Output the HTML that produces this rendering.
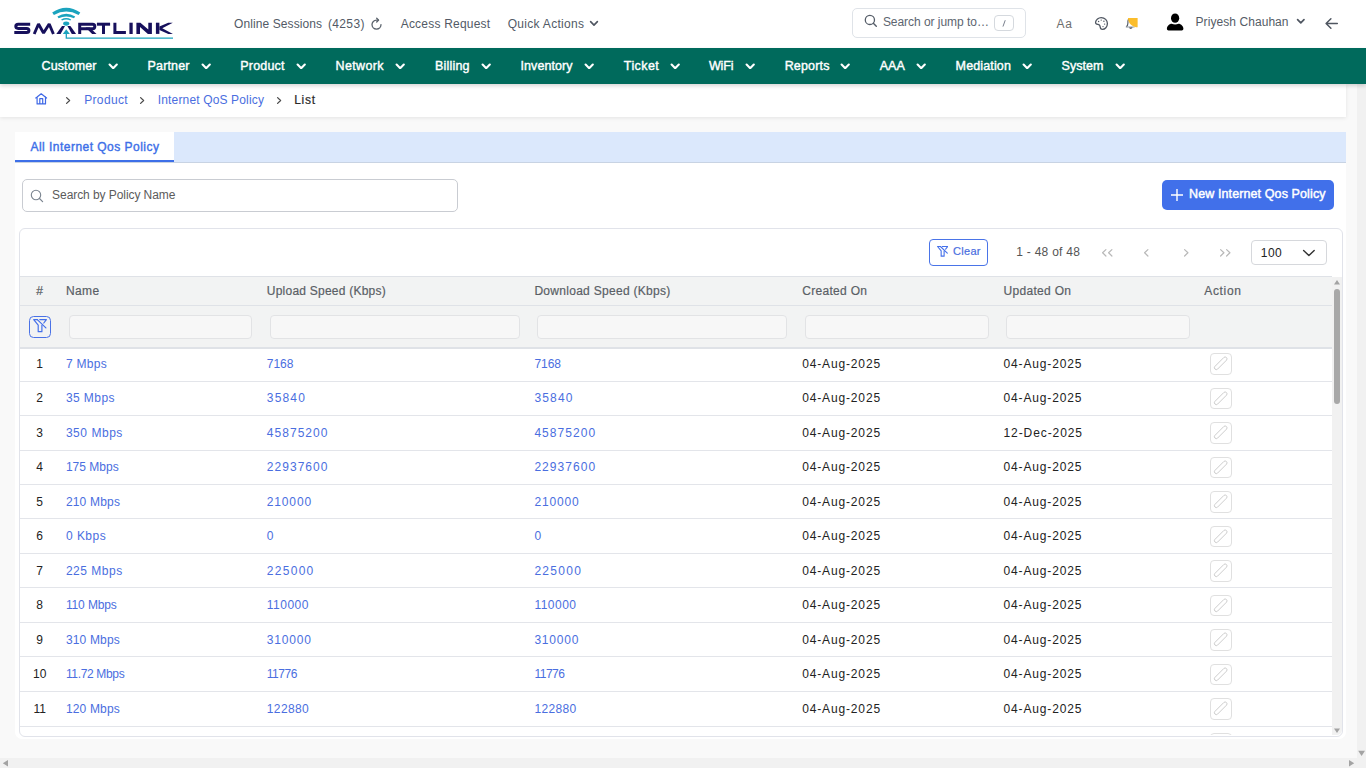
<!DOCTYPE html>
<html><head><meta charset="utf-8">
<style>
*{box-sizing:border-box;margin:0;padding:0}
html,body{width:1366px;height:768px;overflow:hidden;background:#f9f9f9;font-family:"Liberation Sans",sans-serif;position:relative}
.a{position:absolute;white-space:nowrap}
</style></head>
<body>
<div class="a" style="left:0;top:84px;width:1357px;height:674px;background:#f9f9f9"></div>
<div class="a" style="left:1357px;top:84px;width:9px;height:674px;background:#f1f1f1"></div>
<svg class="a" style="left:1357px;top:749.5px" width="9" height="7" viewBox="0 0 9 7"><path d="M1.2,0.8 L4.6,6 L8,0.8 Z" fill="#a3a3a3"/></svg>
<div class="a" style="left:0;top:758px;width:1366px;height:10px;background:#f1f1f1"></div>
<svg class="a" style="left:1px;top:759px" width="8" height="8" viewBox="0 0 8 8"><path d="M7,1 L1.8,4.2 L7,7.4 Z" fill="#a3a3a3"/></svg>
<svg class="a" style="left:1348px;top:759px" width="8" height="8" viewBox="0 0 8 8"><path d="M1,1 L6.2,4.2 L1,7.4 Z" fill="#a3a3a3"/></svg>
<div class="a" style="left:0;top:84px;width:1346px;height:32.5px;background:#fff;box-shadow:0 1px 4px rgba(0,0,0,.09)"></div>
<div class="a" style="left:15px;top:132px;width:1331px;height:606.5px;background:#fff;border-radius:0 0 7px 7px"></div>
<div class="a" style="left:15px;top:132px;width:1331px;height:31px;background:#dbe8fc;border-bottom:1px solid #c8d3e3"></div>
<div class="a" style="left:15px;top:132px;width:159px;height:30px;background:#fff;border-bottom:2px solid #3d6fe8"></div>
<div class="a" style="left:22px;top:178.5px;width:435.5px;height:33px;border:1px solid #c9ccd2;border-radius:5px;background:#fff"></div>
<svg class="a" style="left:29.5px;top:188.5px" width="14" height="14" viewBox="0 0 14 14"><circle cx="6" cy="6" r="4.7" fill="none" stroke="#7b8590" stroke-width="1.1"/><path d="M9.5,9.5 L12.6,12.6" stroke="#7b8590" stroke-width="1.2" stroke-linecap="round"/></svg>
<div class="a" style="left:1162px;top:180px;width:172px;height:30px;background:#4170ea;border-radius:5px"></div>
<svg class="a" style="left:1170.0px;top:187.6px" width="14" height="14" viewBox="0 0 14 14"><path d="M7,1 V13 M1,7 H13" stroke="#fff" stroke-width="1.4"/></svg>
<div class="a" style="left:19px;top:228px;width:1324px;height:508.5px;border:1px solid #e1e3ea;border-radius:6px;background:#fff"></div>
<div class="a" style="left:929px;top:239px;width:59px;height:27px;border:1px solid #4a74e8;border-radius:4px;background:#fff"></div><svg class="a" style="left:936.5px;top:245.7px" width="11.2" height="11.2" viewBox="0 0 14 14"><g fill="none" stroke="#4470ea" stroke-width="1.38" stroke-linejoin="round" stroke-linecap="round"><path d="M4.3,0.6 H0.7 L5.2,6.1 V12.7 H8.9 V6.3"/><path d="M6.8,0.6 H13.4 L10.8,4.0"/><path d="M4.3,0.6 L12.9,8.9"/></g></svg><svg class="a" style="left:1101px;top:247.5px" width="6.5" height="9.6" viewBox="-1 -1 6.5 9.6"><path d="M3.9,0.6 L0.6,3.8 L3.9,7.0" fill="none" stroke="#b8b8b8" stroke-width="1.2" stroke-linecap="round" stroke-linejoin="round"/></svg><svg class="a" style="left:1106.8px;top:247.5px" width="6.5" height="9.6" viewBox="-1 -1 6.5 9.6"><path d="M3.9,0.6 L0.6,3.8 L3.9,7.0" fill="none" stroke="#b8b8b8" stroke-width="1.2" stroke-linecap="round" stroke-linejoin="round"/></svg><svg class="a" style="left:1143px;top:247.5px" width="6.5" height="9.6" viewBox="-1 -1 6.5 9.6"><path d="M3.9,0.6 L0.6,3.8 L3.9,7.0" fill="none" stroke="#b8b8b8" stroke-width="1.2" stroke-linecap="round" stroke-linejoin="round"/></svg><svg class="a" style="left:1183px;top:247.5px" width="6.5" height="9.6" viewBox="-1 -1 6.5 9.6"><path d="M0.6,0.6 L3.9,3.8 L0.6,7.0" fill="none" stroke="#b8b8b8" stroke-width="1.2" stroke-linecap="round" stroke-linejoin="round"/></svg><svg class="a" style="left:1219px;top:247.5px" width="6.5" height="9.6" viewBox="-1 -1 6.5 9.6"><path d="M0.6,0.6 L3.9,3.8 L0.6,7.0" fill="none" stroke="#b8b8b8" stroke-width="1.2" stroke-linecap="round" stroke-linejoin="round"/></svg><svg class="a" style="left:1225px;top:247.5px" width="6.5" height="9.6" viewBox="-1 -1 6.5 9.6"><path d="M0.6,0.6 L3.9,3.8 L0.6,7.0" fill="none" stroke="#b8b8b8" stroke-width="1.2" stroke-linecap="round" stroke-linejoin="round"/></svg><div class="a" style="left:1250.8px;top:240.3px;width:76px;height:24.5px;border:1px solid #d6d8dc;border-radius:4px;background:#fff"></div><svg class="a" style="left:1302.4px;top:248.6px" width="13.8" height="8.2" viewBox="-1 -1 13.8 8.2"><path d="M0.6,0.6 L5.9,5.6000000000000005 L11.200000000000001,0.6" fill="none" stroke="#333" stroke-width="1.4" stroke-linecap="round" stroke-linejoin="round"/></svg>
<div class="a" style="left:0;top:0;width:1366px;height:768px;clip-path:inset(276px 24px 33px 20px round 0 0 5px 5px)"><div class="a" style="left:20px;top:276px;width:1312px;height:72px;background:#f2f3f3;border-top:1px solid #dfe2e7"></div><div class="a" style="left:20px;top:305px;width:1312px;height:1px;background:#dfe2e7"></div><div class="a" style="left:20px;top:347px;width:1312px;height:1.5px;background:#dfe2e7"></div><div class="a" style="left:20px;top:381px;width:1312px;height:1px;background:#e3e5ea"></div><div class="a" style="left:20px;top:415px;width:1312px;height:1px;background:#e3e5ea"></div><div class="a" style="left:20px;top:450px;width:1312px;height:1px;background:#e3e5ea"></div><div class="a" style="left:20px;top:484px;width:1312px;height:1px;background:#e3e5ea"></div><div class="a" style="left:20px;top:518px;width:1312px;height:1px;background:#e3e5ea"></div><div class="a" style="left:20px;top:553px;width:1312px;height:1px;background:#e3e5ea"></div><div class="a" style="left:20px;top:587px;width:1312px;height:1px;background:#e3e5ea"></div><div class="a" style="left:20px;top:622px;width:1312px;height:1px;background:#e3e5ea"></div><div class="a" style="left:20px;top:656px;width:1312px;height:1px;background:#e3e5ea"></div><div class="a" style="left:20px;top:691px;width:1312px;height:1px;background:#e3e5ea"></div><div class="a" style="left:20px;top:726px;width:1312px;height:1px;background:#e3e5ea"></div><div class="a" style="left:68.9px;top:314.8px;width:183.4px;height:24px;border:1px solid #e2e3e5;border-radius:4px;background:#f7f7f7"></div><div class="a" style="left:269.9px;top:314.8px;width:250.0px;height:24px;border:1px solid #e2e3e5;border-radius:4px;background:#f7f7f7"></div><div class="a" style="left:536.6px;top:314.8px;width:250.8px;height:24px;border:1px solid #e2e3e5;border-radius:4px;background:#f7f7f7"></div><div class="a" style="left:804.5px;top:314.8px;width:184.2px;height:24px;border:1px solid #e2e3e5;border-radius:4px;background:#f7f7f7"></div><div class="a" style="left:1005.5px;top:314.8px;width:184.2px;height:24px;border:1px solid #e2e3e5;border-radius:4px;background:#f7f7f7"></div><div class="a" style="left:29px;top:315.8px;width:22px;height:22px;border:1.3px solid #4a72e6;border-radius:4.5px"></div><svg class="a" style="left:32.6px;top:318.6px" width="14.0" height="14.0" viewBox="0 0 14 14"><g fill="none" stroke="#4470ea" stroke-width="1.20" stroke-linejoin="round" stroke-linecap="round"><path d="M4.3,0.6 H0.7 L5.2,6.1 V12.7 H8.9 V6.3"/><path d="M6.8,0.6 H13.4 L10.8,4.0"/><path d="M4.3,0.6 L12.9,8.9"/></g></svg><div class="a" style="left:1210px;top:353.20px;width:21.5px;height:21.5px;border:1px solid #e0e0e0;border-radius:4px;background:#fff"></div><svg class="a" style="left:1206px;top:350.20px" width="30" height="28" viewBox="0 0 30 28"><path d="M11.54,19.14 L20.54,10.14 A1.9,1.9 0 0 0 17.86,7.46 L8.86,16.46 A1.9,1.9 0 0 0 11.54,19.14 Z" fill="none" stroke="#cdcdcd" stroke-width="1.0"/></svg><div class="a" style="left:1210px;top:387.70px;width:21.5px;height:21.5px;border:1px solid #e0e0e0;border-radius:4px;background:#fff"></div><svg class="a" style="left:1206px;top:384.70px" width="30" height="28" viewBox="0 0 30 28"><path d="M11.54,19.14 L20.54,10.14 A1.9,1.9 0 0 0 17.86,7.46 L8.86,16.46 A1.9,1.9 0 0 0 11.54,19.14 Z" fill="none" stroke="#cdcdcd" stroke-width="1.0"/></svg><div class="a" style="left:1210px;top:422.20px;width:21.5px;height:21.5px;border:1px solid #e0e0e0;border-radius:4px;background:#fff"></div><svg class="a" style="left:1206px;top:419.20px" width="30" height="28" viewBox="0 0 30 28"><path d="M11.54,19.14 L20.54,10.14 A1.9,1.9 0 0 0 17.86,7.46 L8.86,16.46 A1.9,1.9 0 0 0 11.54,19.14 Z" fill="none" stroke="#cdcdcd" stroke-width="1.0"/></svg><div class="a" style="left:1210px;top:456.70px;width:21.5px;height:21.5px;border:1px solid #e0e0e0;border-radius:4px;background:#fff"></div><svg class="a" style="left:1206px;top:453.70px" width="30" height="28" viewBox="0 0 30 28"><path d="M11.54,19.14 L20.54,10.14 A1.9,1.9 0 0 0 17.86,7.46 L8.86,16.46 A1.9,1.9 0 0 0 11.54,19.14 Z" fill="none" stroke="#cdcdcd" stroke-width="1.0"/></svg><div class="a" style="left:1210px;top:491.20px;width:21.5px;height:21.5px;border:1px solid #e0e0e0;border-radius:4px;background:#fff"></div><svg class="a" style="left:1206px;top:488.20px" width="30" height="28" viewBox="0 0 30 28"><path d="M11.54,19.14 L20.54,10.14 A1.9,1.9 0 0 0 17.86,7.46 L8.86,16.46 A1.9,1.9 0 0 0 11.54,19.14 Z" fill="none" stroke="#cdcdcd" stroke-width="1.0"/></svg><div class="a" style="left:1210px;top:525.70px;width:21.5px;height:21.5px;border:1px solid #e0e0e0;border-radius:4px;background:#fff"></div><svg class="a" style="left:1206px;top:522.70px" width="30" height="28" viewBox="0 0 30 28"><path d="M11.54,19.14 L20.54,10.14 A1.9,1.9 0 0 0 17.86,7.46 L8.86,16.46 A1.9,1.9 0 0 0 11.54,19.14 Z" fill="none" stroke="#cdcdcd" stroke-width="1.0"/></svg><div class="a" style="left:1210px;top:560.20px;width:21.5px;height:21.5px;border:1px solid #e0e0e0;border-radius:4px;background:#fff"></div><svg class="a" style="left:1206px;top:557.20px" width="30" height="28" viewBox="0 0 30 28"><path d="M11.54,19.14 L20.54,10.14 A1.9,1.9 0 0 0 17.86,7.46 L8.86,16.46 A1.9,1.9 0 0 0 11.54,19.14 Z" fill="none" stroke="#cdcdcd" stroke-width="1.0"/></svg><div class="a" style="left:1210px;top:594.70px;width:21.5px;height:21.5px;border:1px solid #e0e0e0;border-radius:4px;background:#fff"></div><svg class="a" style="left:1206px;top:591.70px" width="30" height="28" viewBox="0 0 30 28"><path d="M11.54,19.14 L20.54,10.14 A1.9,1.9 0 0 0 17.86,7.46 L8.86,16.46 A1.9,1.9 0 0 0 11.54,19.14 Z" fill="none" stroke="#cdcdcd" stroke-width="1.0"/></svg><div class="a" style="left:1210px;top:629.20px;width:21.5px;height:21.5px;border:1px solid #e0e0e0;border-radius:4px;background:#fff"></div><svg class="a" style="left:1206px;top:626.20px" width="30" height="28" viewBox="0 0 30 28"><path d="M11.54,19.14 L20.54,10.14 A1.9,1.9 0 0 0 17.86,7.46 L8.86,16.46 A1.9,1.9 0 0 0 11.54,19.14 Z" fill="none" stroke="#cdcdcd" stroke-width="1.0"/></svg><div class="a" style="left:1210px;top:663.70px;width:21.5px;height:21.5px;border:1px solid #e0e0e0;border-radius:4px;background:#fff"></div><svg class="a" style="left:1206px;top:660.70px" width="30" height="28" viewBox="0 0 30 28"><path d="M11.54,19.14 L20.54,10.14 A1.9,1.9 0 0 0 17.86,7.46 L8.86,16.46 A1.9,1.9 0 0 0 11.54,19.14 Z" fill="none" stroke="#cdcdcd" stroke-width="1.0"/></svg><div class="a" style="left:1210px;top:698.20px;width:21.5px;height:21.5px;border:1px solid #e0e0e0;border-radius:4px;background:#fff"></div><svg class="a" style="left:1206px;top:695.20px" width="30" height="28" viewBox="0 0 30 28"><path d="M11.54,19.14 L20.54,10.14 A1.9,1.9 0 0 0 17.86,7.46 L8.86,16.46 A1.9,1.9 0 0 0 11.54,19.14 Z" fill="none" stroke="#cdcdcd" stroke-width="1.0"/></svg><div class="a" style="left:1210px;top:732.70px;width:21.5px;height:21.5px;border:1px solid #e0e0e0;border-radius:4px;background:#fff"></div><svg class="a" style="left:1206px;top:729.70px" width="30" height="28" viewBox="0 0 30 28"><path d="M11.54,19.14 L20.54,10.14 A1.9,1.9 0 0 0 17.86,7.46 L8.86,16.46 A1.9,1.9 0 0 0 11.54,19.14 Z" fill="none" stroke="#cdcdcd" stroke-width="1.0"/></svg><div class="a" style="left:1332px;top:277px;width:10px;height:458px;background:#f1f1f1"></div><div class="a" style="left:1334.2px;top:289px;width:6.2px;height:115px;background:#a8a8a8;border-radius:3px"></div><svg class="a" style="left:1333px;top:279px" width="8" height="6" viewBox="0 0 8 6"><path d="M1,5.5 L4,1 L7,5.5 Z" fill="#a3a3a3"/></svg><svg class="a" style="left:1333px;top:727.5px" width="8" height="6" viewBox="0 0 8 6"><path d="M1,0.5 L4,5 L7,0.5 Z" fill="#a3a3a3"/></svg></div>
<div class="a" style="left:0;top:0;width:1366px;height:48px;background:#fff"></div>
<div class="a" style="left:0;top:48px;width:1366px;height:36px;background:#006a5c;box-shadow:0 2px 4px rgba(0,0,0,.16)"></div>
<svg class="a" style="left:0;top:0" width="190" height="48" viewBox="0 0 190 48">
<g fill="none" stroke="#17105c" stroke-width="3.0" stroke-linejoin="miter" stroke-linecap="butt">
<path d="M30.2,24.3 H18.2 Q15.8,24.3 15.8,26.35 Q15.8,28.4 18.2,28.4 H26.6 Q28.9,28.4 28.9,30.45 Q28.9,32.5 26.6,32.5 H14.3"/>
<path d="M34.2,34.0 L38.5,24.0 L43.55,33.0 L49.2,24.0 L53.4,34.0" stroke-linejoin="bevel" stroke-width="2.9"/>

<path d="M79.7,34.0 V24.3 H92.6 Q94.8,24.3 94.8,26.5 Q94.8,28.7 92.6,28.7 H80.5"/>
<path d="M96.9,24.2 H110.1"/><path d="M103.5,24.2 V34.0"/>
<path d="M114.9,22.7 V32.5 H125.9"/>
<path d="M131.05,22.7 V34.0" stroke-width="3.3"/>
</g>
<g fill="#17105c">
<polygon points="85.6,27.6 89.9,27.6 96.5,33.9 92.1,33.9"/>
<polygon points="56.3,33.9 60.6,33.9 65.0,26.1 62.0,26.1"/><polygon points="76.1,33.9 71.8,33.9 67.4,26.1 70.4,26.1"/>
<polygon points="136.4,22.7 140.4,22.7 148.3,29.5 148.3,22.7 151.9,22.7 151.9,33.9 147.9,33.9 140.0,27.1 140.0,33.9 136.4,33.9"/>
<polygon points="155.9,22.7 159.4,22.7 159.4,33.9 155.9,33.9"/>
<polygon points="159.4,26.5 168.2,22.7 172.8,22.7 162.3,28.25 172.9,33.9 168.3,33.9 159.4,29.9"/>
</g>
<g fill="#1ba3be">
<path d="M52.2,12.4 Q66.2,3.0 80.3,12.4 L78.6,15.0 Q66.2,8.2 53.9,15.0 Z"/>
<path d="M57.4,16.6 Q66.3,11.0 75.2,16.6 L74.0,18.3 Q66.3,14.6 58.6,18.3 Z"/>
<path d="M61.1,19.4 Q66.2,16.6 71.2,19.4 L70.4,20.6 Q66.2,18.4 62.0,20.6 Z"/>
</g>
<path d="M66.3,34 V38.2 H173" fill="none" stroke="#1ba3be" stroke-width="1.3"/>
<ellipse cx="66.2" cy="23.6" rx="3.1" ry="2.1" fill="#1ba3be"/>
<polygon points="62.8,34.0 66.2,29.3 69.9,34.0" fill="#1ba3be"/>
</svg>

<svg class="a" style="left:370px;top:17px" width="14" height="14" viewBox="0 0 14 14"><path d="M11.0,7.6 A4.5,4.5 0 1 1 6.5,3.1 H8.4" fill="none" stroke="#58606a" stroke-width="1.3" stroke-linecap="round"/><path d="M6.7,1.2 L8.6,3.1 L6.7,5.0" fill="none" stroke="#58606a" stroke-width="1.3" stroke-linecap="round" stroke-linejoin="round"/></svg>
<svg class="a" style="left:589.0px;top:19.9px" width="10" height="6.7" viewBox="-1 -1 10 6.7"><path d="M0.6,0.6 L4.0,4.1000000000000005 L7.4,0.6" fill="none" stroke="#4f5661" stroke-width="1.6" stroke-linecap="round" stroke-linejoin="round"/></svg>
<div class="a" style="left:852px;top:8px;width:174px;height:30px;border:1px solid #dfe3e8;border-radius:5px;background:#fff"></div>
<svg class="a" style="left:864px;top:14px" width="14" height="14" viewBox="0 0 14 14"><circle cx="5.9" cy="5.9" r="4.6" fill="none" stroke="#555d68" stroke-width="1.3"/><path d="M9.3,9.3 L12.3,12.3" stroke="#555d68" stroke-width="1.4" stroke-linecap="round"/></svg>
<div class="a" style="left:994px;top:15px;width:19.5px;height:15.5px;border:1px solid #d5d9de;border-radius:4px;background:#fff"></div>
<svg class="a" style="left:998px;top:17px" width="12" height="12" viewBox="0 0 12 12"><path d="M7.1,3.6 L5.1,9.2" stroke="#6b7280" stroke-width="0.9" stroke-linecap="round"/></svg>
<svg class="a" style="left:1094px;top:15.6px" width="15" height="15" viewBox="0 0 15 15"><path d="M7.2,1.6 C10.9,1.6 13.4,4.3 13.4,7.6 C13.4,11 11,13.4 8.4,13.4 C6.8,13.4 6.3,12.3 6.2,11 C6.1,9.4 5.6,8.4 3.8,8.3 C2.3,8.2 1.4,7.6 1.6,6.2 C1.9,3.7 4.4,1.6 7.2,1.6 Z" fill="none" stroke="#4f5661" stroke-width="1.3"/><circle cx="4.6" cy="5.5" r="0.7" fill="#4f5661"/><circle cx="7.2" cy="4.1" r="0.7" fill="#4f5661"/><circle cx="9.9" cy="5.2" r="0.7" fill="#4f5661"/><circle cx="10.6" cy="8.1" r="0.7" fill="#4f5661"/><circle cx="9.0" cy="10.6" r="0.7" fill="#4f5661"/></svg>
<svg class="a" style="left:1124px;top:16px" width="16" height="16" viewBox="0 0 16 16"><path d="M2.3,10.9 C3.4,10.0 3.9,8.8 3.9,7.0 V5.4 C3.9,3.6 5.6,2.7 7.8,2.7" fill="none" stroke="#5a616b" stroke-width="1.2"/><path d="M1.8,11.0 H10.6" stroke="#9aa1aa" stroke-width="1.1"/><path d="M5.6,11.4 Q6.8,13.2 8.2,11.4" fill="none" stroke="#5a616b" stroke-width="1.3"/><path d="M4,2 H13.6 V11.3 C9.6,11.3 4,8.2 4,2 Z" fill="#fbbd2c"/></svg>
<svg class="a" style="left:1166px;top:13px" width="18" height="18" viewBox="0 0 18 18"><ellipse cx="9.1" cy="5.15" rx="4.1" ry="4.65" fill="#000"/><path d="M0.9,16 C0.9,12.6 3.6,10.8 5.6,10.7 Q9.1,12.3 12.6,10.7 C14.6,10.8 17.4,12.6 17.4,16 Q17.4,17.4 15.8,17.4 H2.5 Q0.9,17.4 0.9,16 Z" fill="#000"/></svg>
<svg class="a" style="left:1296.2px;top:18.0px" width="9.6" height="6.4" viewBox="-1 -1 9.6 6.4"><path d="M0.6,0.6 L3.8,3.8000000000000003 L7.0,0.6" fill="none" stroke="#4f5661" stroke-width="1.7" stroke-linecap="round" stroke-linejoin="round"/></svg>
<svg class="a" style="left:1323.6px;top:17px" width="15" height="13" viewBox="0 0 15 13"><path d="M13.3,6.5 H2.2 M6.9,1.8 L2.1,6.5 L6.9,11.3" fill="none" stroke="#4f5661" stroke-width="1.5" stroke-linecap="round" stroke-linejoin="round"/></svg>

<svg class="a" style="left:108.1px;top:62.5px" width="10.4" height="6.8" viewBox="-1 -1 10.4 6.8"><path d="M0.6,0.6 L4.2,4.2 L7.800000000000001,0.6" fill="none" stroke="#ffffff" stroke-width="2.1" stroke-linecap="round" stroke-linejoin="round"/></svg><svg class="a" style="left:201.1px;top:62.5px" width="10.4" height="6.8" viewBox="-1 -1 10.4 6.8"><path d="M0.6,0.6 L4.2,4.2 L7.800000000000001,0.6" fill="none" stroke="#ffffff" stroke-width="2.1" stroke-linecap="round" stroke-linejoin="round"/></svg><svg class="a" style="left:295.90000000000003px;top:62.5px" width="10.4" height="6.8" viewBox="-1 -1 10.4 6.8"><path d="M0.6,0.6 L4.2,4.2 L7.800000000000001,0.6" fill="none" stroke="#ffffff" stroke-width="2.1" stroke-linecap="round" stroke-linejoin="round"/></svg><svg class="a" style="left:395.1px;top:62.5px" width="10.4" height="6.8" viewBox="-1 -1 10.4 6.8"><path d="M0.6,0.6 L4.2,4.2 L7.800000000000001,0.6" fill="none" stroke="#ffffff" stroke-width="2.1" stroke-linecap="round" stroke-linejoin="round"/></svg><svg class="a" style="left:481.1px;top:62.5px" width="10.4" height="6.8" viewBox="-1 -1 10.4 6.8"><path d="M0.6,0.6 L4.2,4.2 L7.800000000000001,0.6" fill="none" stroke="#ffffff" stroke-width="2.1" stroke-linecap="round" stroke-linejoin="round"/></svg><svg class="a" style="left:584.1px;top:62.5px" width="10.4" height="6.8" viewBox="-1 -1 10.4 6.8"><path d="M0.6,0.6 L4.2,4.2 L7.800000000000001,0.6" fill="none" stroke="#ffffff" stroke-width="2.1" stroke-linecap="round" stroke-linejoin="round"/></svg><svg class="a" style="left:669.6px;top:62.5px" width="10.4" height="6.8" viewBox="-1 -1 10.4 6.8"><path d="M0.6,0.6 L4.2,4.2 L7.800000000000001,0.6" fill="none" stroke="#ffffff" stroke-width="2.1" stroke-linecap="round" stroke-linejoin="round"/></svg><svg class="a" style="left:744.8000000000001px;top:62.5px" width="10.4" height="6.8" viewBox="-1 -1 10.4 6.8"><path d="M0.6,0.6 L4.2,4.2 L7.800000000000001,0.6" fill="none" stroke="#ffffff" stroke-width="2.1" stroke-linecap="round" stroke-linejoin="round"/></svg><svg class="a" style="left:840.3000000000001px;top:62.5px" width="10.4" height="6.8" viewBox="-1 -1 10.4 6.8"><path d="M0.6,0.6 L4.2,4.2 L7.800000000000001,0.6" fill="none" stroke="#ffffff" stroke-width="2.1" stroke-linecap="round" stroke-linejoin="round"/></svg><svg class="a" style="left:915.8000000000001px;top:62.5px" width="10.4" height="6.8" viewBox="-1 -1 10.4 6.8"><path d="M0.6,0.6 L4.2,4.2 L7.800000000000001,0.6" fill="none" stroke="#ffffff" stroke-width="2.1" stroke-linecap="round" stroke-linejoin="round"/></svg><svg class="a" style="left:1021.8000000000001px;top:62.5px" width="10.4" height="6.8" viewBox="-1 -1 10.4 6.8"><path d="M0.6,0.6 L4.2,4.2 L7.800000000000001,0.6" fill="none" stroke="#ffffff" stroke-width="2.1" stroke-linecap="round" stroke-linejoin="round"/></svg><svg class="a" style="left:1114.6px;top:62.5px" width="10.4" height="6.8" viewBox="-1 -1 10.4 6.8"><path d="M0.6,0.6 L4.2,4.2 L7.800000000000001,0.6" fill="none" stroke="#ffffff" stroke-width="2.1" stroke-linecap="round" stroke-linejoin="round"/></svg>

<svg class="a" style="left:34.8px;top:93.1px" width="13" height="13" viewBox="0 0 13 13"><path d="M0.8,5.0 L6.2,0.8 L11.6,5.0 M2.1,3.9 V10.9 H10.5 V3.9 M4.8,10.9 V5.6 H7.7 V10.9" fill="none" stroke="#3f68e6" stroke-width="1.2" stroke-linejoin="round" stroke-linecap="round"/></svg>
<svg class="a" style="left:65.2px;top:95.8px" width="6.2" height="9.0" viewBox="-1 -1 6.2 9.0"><path d="M0.6,0.6 L3.6,3.5 L0.6,6.4" fill="none" stroke="#4a4a4a" stroke-width="1.3" stroke-linecap="round" stroke-linejoin="round"/></svg><svg class="a" style="left:139.4px;top:95.8px" width="6.2" height="9.0" viewBox="-1 -1 6.2 9.0"><path d="M0.6,0.6 L3.6,3.5 L0.6,6.4" fill="none" stroke="#4a4a4a" stroke-width="1.3" stroke-linecap="round" stroke-linejoin="round"/></svg><svg class="a" style="left:275.6px;top:95.8px" width="6.2" height="9.0" viewBox="-1 -1 6.2 9.0"><path d="M0.6,0.6 L3.6,3.5 L0.6,6.4" fill="none" stroke="#4a4a4a" stroke-width="1.3" stroke-linecap="round" stroke-linejoin="round"/></svg>
<span class="a" style="top:17.64px;font-size:12px;line-height:12px;color:#525a66;letter-spacing:0.10px;left:234.00px;">Online Sessions</span>
<span class="a" style="top:17.64px;font-size:12px;line-height:12px;color:#525a66;letter-spacing:0.38px;left:327.90px;">(4253)</span>
<span class="a" style="top:17.74px;font-size:12px;line-height:12px;color:#525a66;letter-spacing:0.21px;left:400.70px;">Access Request</span>
<span class="a" style="top:17.74px;font-size:12px;line-height:12px;color:#525a66;letter-spacing:0.30px;left:507.70px;">Quick Actions</span>
<span class="a" style="top:16.24px;font-size:12px;line-height:12px;color:#5d6570;letter-spacing:-0.04px;left:882.90px;">Search or jump to…</span>
<span class="a" style="top:18.04px;font-size:12px;line-height:12px;color:#6e6e6e;letter-spacing:0.82px;left:1056.50px;">Aa</span>
<span class="a" style="top:15.84px;font-size:12px;line-height:12px;color:#555c66;letter-spacing:0.07px;left:1195.50px;">Priyesh Chauhan</span>
<span class="a" style="top:59.52px;font-size:12.5px;line-height:12.5px;color:#ffffff;letter-spacing:0.12px;-webkit-text-stroke:0.4px #ffffff;left:41.50px;">Customer</span>
<span class="a" style="top:59.52px;font-size:12.5px;line-height:12.5px;color:#ffffff;letter-spacing:0.17px;-webkit-text-stroke:0.4px #ffffff;left:147.50px;">Partner</span>
<span class="a" style="top:59.52px;font-size:12.5px;line-height:12.5px;color:#ffffff;letter-spacing:0.19px;-webkit-text-stroke:0.4px #ffffff;left:240.30px;">Product</span>
<span class="a" style="top:59.52px;font-size:12.5px;line-height:12.5px;color:#ffffff;letter-spacing:0.36px;-webkit-text-stroke:0.4px #ffffff;left:335.50px;">Network</span>
<span class="a" style="top:59.52px;font-size:12.5px;line-height:12.5px;color:#ffffff;letter-spacing:0.18px;-webkit-text-stroke:0.4px #ffffff;left:435.10px;">Billing</span>
<span class="a" style="top:59.52px;font-size:12.5px;line-height:12.5px;color:#ffffff;letter-spacing:0.07px;-webkit-text-stroke:0.4px #ffffff;left:520.50px;">Inventory</span>
<span class="a" style="top:59.52px;font-size:12.5px;line-height:12.5px;color:#ffffff;letter-spacing:0.41px;-webkit-text-stroke:0.4px #ffffff;left:623.80px;">Ticket</span>
<span class="a" style="top:59.52px;font-size:12.5px;line-height:12.5px;color:#ffffff;letter-spacing:-0.13px;-webkit-text-stroke:0.4px #ffffff;left:708.90px;">WiFi</span>
<span class="a" style="top:59.52px;font-size:12.5px;line-height:12.5px;color:#ffffff;letter-spacing:0.16px;-webkit-text-stroke:0.4px #ffffff;left:784.70px;">Reports</span>
<span class="a" style="top:59.52px;font-size:12.5px;line-height:12.5px;color:#ffffff;letter-spacing:0.09px;-webkit-text-stroke:0.4px #ffffff;left:879.70px;">AAA</span>
<span class="a" style="top:59.52px;font-size:12.5px;line-height:12.5px;color:#ffffff;letter-spacing:0.14px;-webkit-text-stroke:0.4px #ffffff;left:955.60px;">Mediation</span>
<span class="a" style="top:59.52px;font-size:12.5px;line-height:12.5px;color:#ffffff;letter-spacing:0.07px;-webkit-text-stroke:0.4px #ffffff;left:1061.50px;">System</span>
<span class="a" style="top:93.94px;font-size:12px;line-height:12px;color:#4a6ee0;letter-spacing:0.34px;left:84.20px;">Product</span>
<span class="a" style="top:93.94px;font-size:12px;line-height:12px;color:#4a6ee0;letter-spacing:0.15px;left:157.80px;">Internet QoS Policy</span>
<span class="a" style="top:93.94px;font-size:12px;line-height:12px;color:#2a2a2a;letter-spacing:0.71px;-webkit-text-stroke:0.2px #2a2a2a;left:294.20px;">List</span>
<span class="a" style="top:141.04px;font-size:12px;line-height:12px;color:#3d6fe8;letter-spacing:0.47px;-webkit-text-stroke:0.4px #3d6fe8;left:30.50px;">All Internet Qos Policy</span>
<span class="a" style="top:188.84px;font-size:12px;line-height:12px;color:#5b5b5b;letter-spacing:-0.07px;left:52.10px;">Search by Policy Name</span>
<span class="a" style="top:187.72px;font-size:12.5px;line-height:12.5px;color:#ffffff;letter-spacing:0.11px;-webkit-text-stroke:0.45px #ffffff;left:1189.00px;">New Internet Qos Policy</span>
<span class="a" style="top:245.89px;font-size:11px;line-height:11px;color:#4a6ee0;letter-spacing:0.28px;-webkit-text-stroke:0.2px #4a6ee0;left:953.10px;">Clear</span>
<span class="a" style="top:245.64px;font-size:12px;line-height:12px;color:#555;letter-spacing:0.26px;left:1016.30px;">1 - 48 of 48</span>
<span class="a" style="top:246.84px;font-size:12px;line-height:12px;color:#222;letter-spacing:0.49px;left:1260.80px;">100</span>
<span class="a" style="top:285.04px;font-size:12px;line-height:12px;color:#5a5f66;-webkit-text-stroke:0.2px #5a5f66;left:36.30px;">#</span>
<span class="a" style="top:285.04px;font-size:12px;line-height:12px;color:#5a5f66;letter-spacing:0.40px;-webkit-text-stroke:0.2px #5a5f66;left:65.90px;">Name</span>
<span class="a" style="top:285.04px;font-size:12px;line-height:12px;color:#5a5f66;letter-spacing:0.23px;-webkit-text-stroke:0.2px #5a5f66;left:266.80px;">Upload Speed (Kbps)</span>
<span class="a" style="top:285.04px;font-size:12px;line-height:12px;color:#5a5f66;letter-spacing:0.29px;-webkit-text-stroke:0.2px #5a5f66;left:534.40px;">Download Speed (Kbps)</span>
<span class="a" style="top:285.04px;font-size:12px;line-height:12px;color:#5a5f66;letter-spacing:0.31px;-webkit-text-stroke:0.2px #5a5f66;left:802.20px;">Created On</span>
<span class="a" style="top:285.04px;font-size:12px;line-height:12px;color:#5a5f66;letter-spacing:0.31px;-webkit-text-stroke:0.2px #5a5f66;left:1003.50px;">Updated On</span>
<span class="a" style="top:285.04px;font-size:12px;line-height:12px;color:#5a5f66;letter-spacing:0.65px;-webkit-text-stroke:0.2px #5a5f66;left:1204.30px;">Action</span>
<span class="a" style="top:358.04px;font-size:12px;line-height:12px;color:#222;left:19.70px;width:40px;text-align:center;">1</span>
<span class="a" style="top:358.04px;font-size:12px;line-height:12px;color:#4a6ee0;letter-spacing:0.31px;left:65.90px;">7 Mbps</span>
<span class="a" style="top:358.04px;font-size:12px;line-height:12px;color:#4a6ee0;letter-spacing:-0.03px;left:266.80px;">7168</span>
<span class="a" style="top:358.04px;font-size:12px;line-height:12px;color:#4a6ee0;letter-spacing:-0.03px;left:534.40px;">7168</span>
<span class="a" style="top:358.04px;font-size:12px;line-height:12px;color:#222;letter-spacing:0.85px;left:802.20px;">04-Aug-2025</span>
<span class="a" style="top:358.04px;font-size:12px;line-height:12px;color:#222;letter-spacing:0.85px;left:1003.50px;">04-Aug-2025</span>
<span class="a" style="top:392.49px;font-size:12px;line-height:12px;color:#222;left:19.70px;width:40px;text-align:center;">2</span>
<span class="a" style="top:392.49px;font-size:12px;line-height:12px;color:#4a6ee0;letter-spacing:0.43px;left:65.90px;">35 Mbps</span>
<span class="a" style="top:392.49px;font-size:12px;line-height:12px;color:#4a6ee0;letter-spacing:1.16px;left:266.80px;">35840</span>
<span class="a" style="top:392.49px;font-size:12px;line-height:12px;color:#4a6ee0;letter-spacing:1.16px;left:534.40px;">35840</span>
<span class="a" style="top:392.49px;font-size:12px;line-height:12px;color:#222;letter-spacing:0.85px;left:802.20px;">04-Aug-2025</span>
<span class="a" style="top:392.49px;font-size:12px;line-height:12px;color:#222;letter-spacing:0.85px;left:1003.50px;">04-Aug-2025</span>
<span class="a" style="top:426.94px;font-size:12px;line-height:12px;color:#222;left:19.70px;width:40px;text-align:center;">3</span>
<span class="a" style="top:426.94px;font-size:12px;line-height:12px;color:#4a6ee0;letter-spacing:0.54px;left:65.90px;">350 Mbps</span>
<span class="a" style="top:426.94px;font-size:12px;line-height:12px;color:#4a6ee0;letter-spacing:1.04px;left:266.80px;">45875200</span>
<span class="a" style="top:426.94px;font-size:12px;line-height:12px;color:#4a6ee0;letter-spacing:1.04px;left:534.40px;">45875200</span>
<span class="a" style="top:426.94px;font-size:12px;line-height:12px;color:#222;letter-spacing:0.85px;left:802.20px;">04-Aug-2025</span>
<span class="a" style="top:426.94px;font-size:12px;line-height:12px;color:#222;letter-spacing:0.91px;left:1003.50px;">12-Dec-2025</span>
<span class="a" style="top:461.39px;font-size:12px;line-height:12px;color:#222;left:19.70px;width:40px;text-align:center;">4</span>
<span class="a" style="top:461.39px;font-size:12px;line-height:12px;color:#4a6ee0;letter-spacing:0.01px;left:65.90px;">175 Mbps</span>
<span class="a" style="top:461.39px;font-size:12px;line-height:12px;color:#4a6ee0;letter-spacing:1.04px;left:266.80px;">22937600</span>
<span class="a" style="top:461.39px;font-size:12px;line-height:12px;color:#4a6ee0;letter-spacing:1.04px;left:534.40px;">22937600</span>
<span class="a" style="top:461.39px;font-size:12px;line-height:12px;color:#222;letter-spacing:0.85px;left:802.20px;">04-Aug-2025</span>
<span class="a" style="top:461.39px;font-size:12px;line-height:12px;color:#222;letter-spacing:0.85px;left:1003.50px;">04-Aug-2025</span>
<span class="a" style="top:495.84px;font-size:12px;line-height:12px;color:#222;left:19.70px;width:40px;text-align:center;">5</span>
<span class="a" style="top:495.84px;font-size:12px;line-height:12px;color:#4a6ee0;letter-spacing:0.19px;left:65.90px;">210 Mbps</span>
<span class="a" style="top:495.84px;font-size:12px;line-height:12px;color:#4a6ee0;letter-spacing:0.85px;left:266.80px;">210000</span>
<span class="a" style="top:495.84px;font-size:12px;line-height:12px;color:#4a6ee0;letter-spacing:0.85px;left:534.40px;">210000</span>
<span class="a" style="top:495.84px;font-size:12px;line-height:12px;color:#222;letter-spacing:0.85px;left:802.20px;">04-Aug-2025</span>
<span class="a" style="top:495.84px;font-size:12px;line-height:12px;color:#222;letter-spacing:0.85px;left:1003.50px;">04-Aug-2025</span>
<span class="a" style="top:530.29px;font-size:12px;line-height:12px;color:#222;left:19.70px;width:40px;text-align:center;">6</span>
<span class="a" style="top:530.29px;font-size:12px;line-height:12px;color:#4a6ee0;letter-spacing:0.49px;left:65.90px;">0 Kbps</span>
<span class="a" style="top:530.29px;font-size:12px;line-height:12px;color:#4a6ee0;left:266.80px;">0</span>
<span class="a" style="top:530.29px;font-size:12px;line-height:12px;color:#4a6ee0;left:534.40px;">0</span>
<span class="a" style="top:530.29px;font-size:12px;line-height:12px;color:#222;letter-spacing:0.85px;left:802.20px;">04-Aug-2025</span>
<span class="a" style="top:530.29px;font-size:12px;line-height:12px;color:#222;letter-spacing:0.85px;left:1003.50px;">04-Aug-2025</span>
<span class="a" style="top:564.74px;font-size:12px;line-height:12px;color:#222;left:19.70px;width:40px;text-align:center;">7</span>
<span class="a" style="top:564.74px;font-size:12px;line-height:12px;color:#4a6ee0;letter-spacing:0.51px;left:65.90px;">225 Mbps</span>
<span class="a" style="top:564.74px;font-size:12px;line-height:12px;color:#4a6ee0;letter-spacing:1.29px;left:266.80px;">225000</span>
<span class="a" style="top:564.74px;font-size:12px;line-height:12px;color:#4a6ee0;letter-spacing:1.29px;left:534.40px;">225000</span>
<span class="a" style="top:564.74px;font-size:12px;line-height:12px;color:#222;letter-spacing:0.85px;left:802.20px;">04-Aug-2025</span>
<span class="a" style="top:564.74px;font-size:12px;line-height:12px;color:#222;letter-spacing:0.85px;left:1003.50px;">04-Aug-2025</span>
<span class="a" style="top:599.19px;font-size:12px;line-height:12px;color:#222;left:19.70px;width:40px;text-align:center;">8</span>
<span class="a" style="top:599.19px;font-size:12px;line-height:12px;color:#4a6ee0;letter-spacing:-0.12px;left:65.90px;">110 Mbps</span>
<span class="a" style="top:599.19px;font-size:12px;line-height:12px;color:#4a6ee0;letter-spacing:0.49px;left:266.80px;">110000</span>
<span class="a" style="top:599.19px;font-size:12px;line-height:12px;color:#4a6ee0;letter-spacing:0.49px;left:534.40px;">110000</span>
<span class="a" style="top:599.19px;font-size:12px;line-height:12px;color:#222;letter-spacing:0.85px;left:802.20px;">04-Aug-2025</span>
<span class="a" style="top:599.19px;font-size:12px;line-height:12px;color:#222;letter-spacing:0.85px;left:1003.50px;">04-Aug-2025</span>
<span class="a" style="top:633.64px;font-size:12px;line-height:12px;color:#222;left:19.70px;width:40px;text-align:center;">9</span>
<span class="a" style="top:633.64px;font-size:12px;line-height:12px;color:#4a6ee0;letter-spacing:0.16px;left:65.90px;">310 Mbps</span>
<span class="a" style="top:633.64px;font-size:12px;line-height:12px;color:#4a6ee0;letter-spacing:0.81px;left:266.80px;">310000</span>
<span class="a" style="top:633.64px;font-size:12px;line-height:12px;color:#4a6ee0;letter-spacing:0.81px;left:534.40px;">310000</span>
<span class="a" style="top:633.64px;font-size:12px;line-height:12px;color:#222;letter-spacing:0.85px;left:802.20px;">04-Aug-2025</span>
<span class="a" style="top:633.64px;font-size:12px;line-height:12px;color:#222;letter-spacing:0.85px;left:1003.50px;">04-Aug-2025</span>
<span class="a" style="top:668.09px;font-size:12px;line-height:12px;color:#222;left:19.70px;width:40px;text-align:center;">10</span>
<span class="a" style="top:668.09px;font-size:12px;line-height:12px;color:#4a6ee0;letter-spacing:-0.34px;left:65.90px;">11.72 Mbps</span>
<span class="a" style="top:668.09px;font-size:12px;line-height:12px;color:#4a6ee0;letter-spacing:-0.47px;left:266.80px;">11776</span>
<span class="a" style="top:668.09px;font-size:12px;line-height:12px;color:#4a6ee0;letter-spacing:-0.47px;left:534.40px;">11776</span>
<span class="a" style="top:668.09px;font-size:12px;line-height:12px;color:#222;letter-spacing:0.85px;left:802.20px;">04-Aug-2025</span>
<span class="a" style="top:668.09px;font-size:12px;line-height:12px;color:#222;letter-spacing:0.85px;left:1003.50px;">04-Aug-2025</span>
<span class="a" style="top:702.54px;font-size:12px;line-height:12px;color:#222;left:19.70px;width:40px;text-align:center;">11</span>
<span class="a" style="top:702.54px;font-size:12px;line-height:12px;color:#4a6ee0;letter-spacing:0.16px;left:65.90px;">120 Mbps</span>
<span class="a" style="top:702.54px;font-size:12px;line-height:12px;color:#4a6ee0;letter-spacing:0.37px;left:266.80px;">122880</span>
<span class="a" style="top:702.54px;font-size:12px;line-height:12px;color:#4a6ee0;letter-spacing:0.37px;left:534.40px;">122880</span>
<span class="a" style="top:702.54px;font-size:12px;line-height:12px;color:#222;letter-spacing:0.85px;left:802.20px;">04-Aug-2025</span>
<span class="a" style="top:702.54px;font-size:12px;line-height:12px;color:#222;letter-spacing:0.85px;left:1003.50px;">04-Aug-2025</span>
</body></html>
